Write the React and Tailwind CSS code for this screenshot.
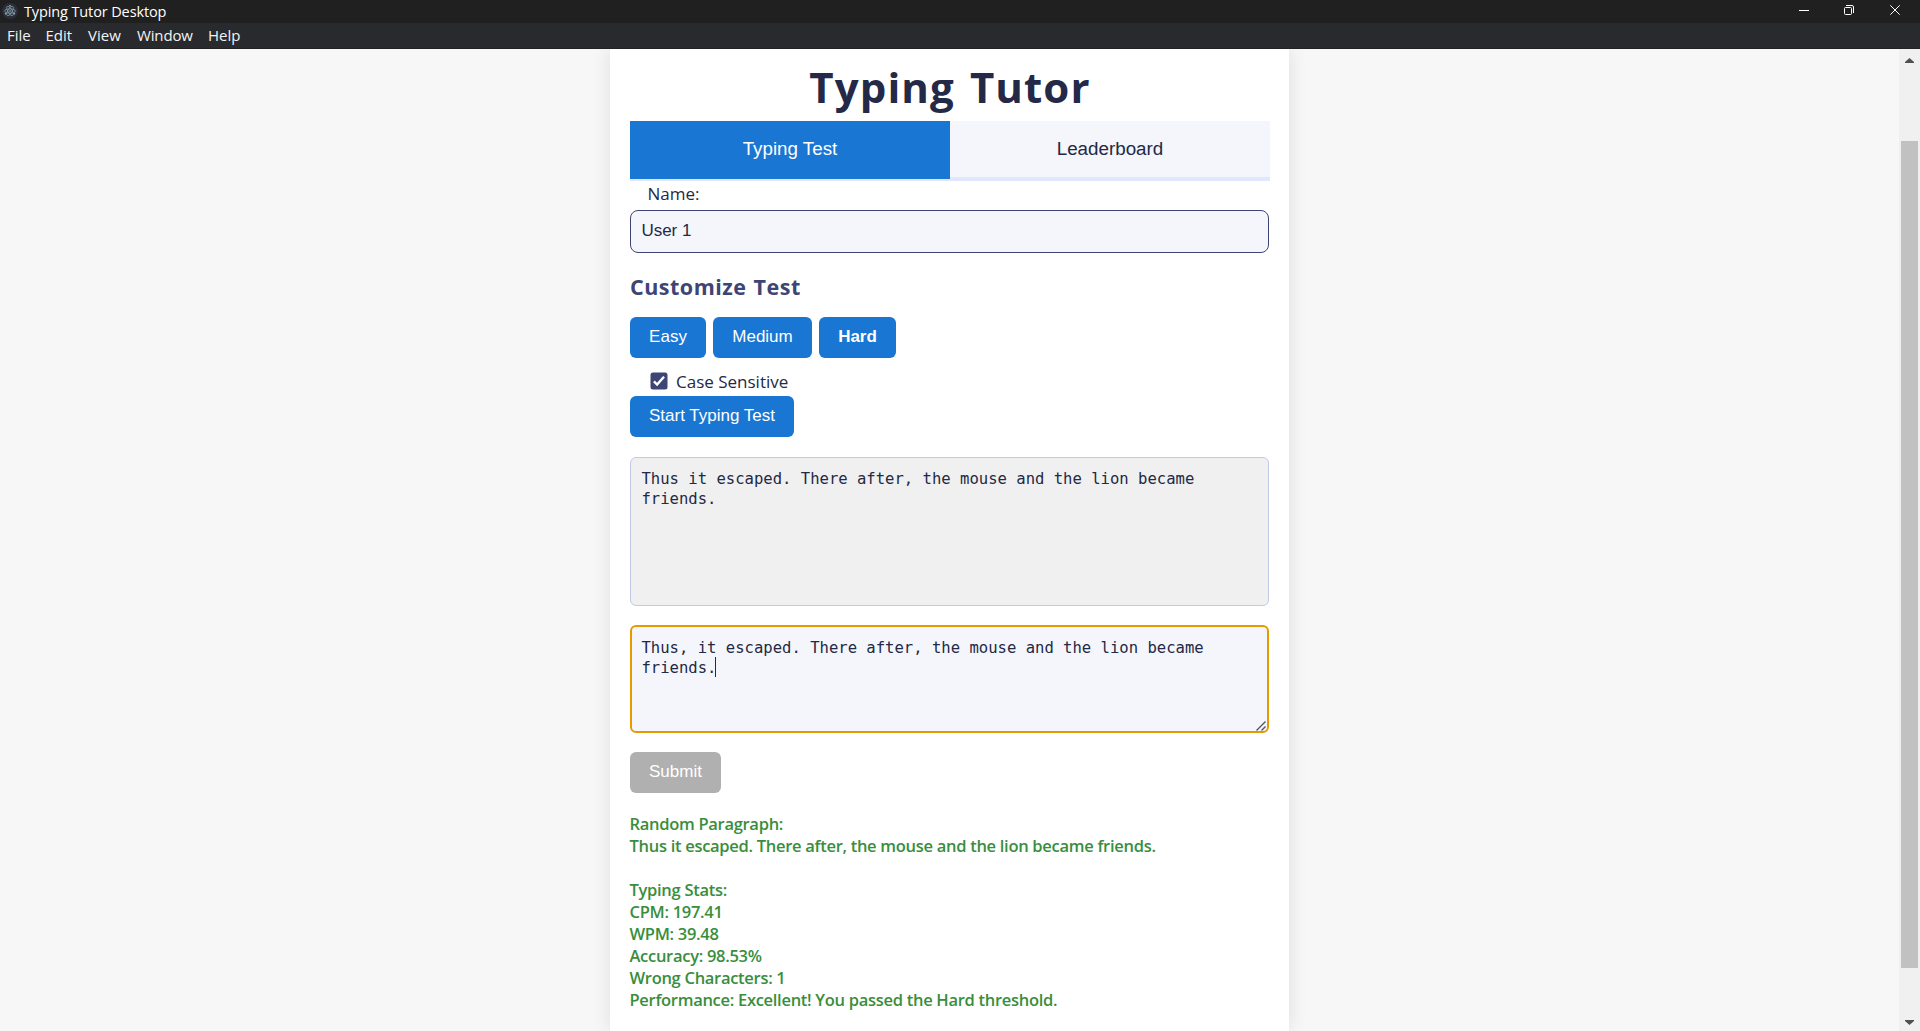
const BUTTON =
  "h-[41px] rounded-[6px] bg-[#1976d2] text-center font-['Liberation_Sans',sans-serif] text-[17px] text-white";

const LEVELS = [
  { name: "Easy", width: "w-[76px]" },
  { name: "Medium", width: "w-[99px]" },
  { name: "Hard", width: "w-[77px] font-bold" },
];

const RESULTS = [
  "Random Paragraph:",
  "Thus it escaped. There after, the mouse and the lion became friends.",
  "",
  "Typing Stats:",
  "CPM: 197.41",
  "WPM: 39.48",
  "Accuracy: 98.53%",
  "Wrong Characters: 1",
  "Performance: Excellent! You passed the Hard threshold.",
];

function AppIcon() {
  return (
    <svg width="16" height="16" viewBox="0 0 16 16" fill="none">
      <circle cx="8" cy="8" r="8" fill="#2b2e3a" />
      <g stroke="#7c9aa2" strokeWidth="0.8">
        <ellipse cx="8" cy="8" rx="5.3" ry="2.1" />
        <ellipse cx="8" cy="8" rx="5.3" ry="2.1" transform="rotate(60 8 8)" />
        <ellipse cx="8" cy="8" rx="5.3" ry="2.1" transform="rotate(120 8 8)" />
      </g>
      <g fill="#9fc2c8">
        <circle cx="8" cy="8" r="0.8" />
        <circle cx="3.6" cy="10.8" r="0.8" />
        <circle cx="12.4" cy="10.8" r="0.8" />
        <circle cx="8" cy="2.8" r="0.8" />
      </g>
    </svg>
  );
}

function TitleBar() {
  return (
    <div className="flex h-[23px] shrink-0 items-start justify-between bg-[#202020] text-white">
      <div className="flex items-start pl-[2px]">
        <div className="mt-[3px]">
          <AppIcon />
        </div>
        <span className="ml-[6px] text-[14.5px] leading-[23px] tracking-[-0.12px]">Typing Tutor Desktop</span>
      </div>
      <div className="flex items-start">
        <svg width="10" height="20" className="mr-[35px]">
          <path d="M0 10.5H10" stroke="#fff" />
        </svg>
        <svg width="10" height="20" className="mr-[36px]" fill="none" stroke="#fff">
          <rect x="0.5" y="7.5" width="7" height="7" rx="1" />
          <path d="M2 5.5H8A1.5 1.5 0 0 1 9.5 7V13" />
        </svg>
        <svg width="10" height="20" className="mr-[20px]">
          <path d="M0.3 5.3L9.7 14.7M9.7 5.3L0.3 14.7" stroke="#fff" />
        </svg>
      </div>
    </div>
  );
}

function MenuBar() {
  return (
    <div className="flex h-[26px] shrink-0 border-b border-[#212225] bg-[#292a2e] pl-[7px] text-[15px] leading-[25px] text-[#f3f3f3]">
      <span className="w-[38.5px]">File</span>
      <span className="w-[42.5px]">Edit</span>
      <span className="w-[49px]">View</span>
      <span className="w-[71px] tracking-[-0.15px]">Window</span>
      <span>Help</span>
    </div>
  );
}

function ScrollBar() {
  return (
    <div className="flex w-[21px] shrink-0 flex-col items-center bg-[#f0f0f0]">
      <svg width="9" height="5" className="mt-[9px] mb-[78px]" fill="#505050">
        <path d="M4.5 0L9 4V5H0V4Z" />
      </svg>
      <div className="h-[827px] w-[17px] bg-[#c1c1c1]" />
      <svg width="9" height="5" className="mt-[52px]" fill="#505050">
        <path d="M0 0H9V1L4.5 5L0 1Z" />
      </svg>
    </div>
  );
}

export default function App() {
  return (
    <div className="flex h-[1031px] w-[1920px] flex-col overflow-hidden bg-[#f7f7f7] font-['Open_Sans',sans-serif] text-[#232946]">
      <TitleBar />
      <MenuBar />
      <div className="flex min-h-0 flex-1">
        <div className="flex min-w-0 flex-1 overflow-hidden pl-[610px]">
          <main className="w-[679px] bg-white pl-[20px] shadow-[0_0_18px_rgba(0,0,0,0.1)]">
            <h1 className="h-[72px] w-[640px] text-center text-[42px] leading-[75px] font-bold tracking-[1.1px] [word-spacing:3px]">
              Typing Tutor
            </h1>

            <div className="flex h-[60px] w-[640px] font-['Liberation_Sans',sans-serif] text-[18.8px] leading-[55px]">
              <div className="flex w-[320px] flex-col border-b-2 border-[#e0e7ff]">
                <button className="h-[58px] bg-[#1976d2] pb-[3px] text-white">Typing Test</button>
              </div>
              <div className="w-[320px] border-b-4 border-[#e0e7ff]">
                <button className="h-[56px] w-full bg-[#f4f6fb] pb-[1px]">Leaderboard</button>
              </div>
            </div>

            <div className="h-[29px] pl-[17.5px] text-[17px] leading-[25px]">Name:</div>
            <div className="flex h-[43px] w-[639px] items-center rounded-[8px] border border-[#3d4575] bg-[#f4f6fb] pb-[2px] pl-[10.4px] font-['Liberation_Sans',sans-serif] text-[17px]">
              User 1
            </div>

            <h2 className="h-[64px] pt-[2px] text-[21.5px] leading-[63px] font-bold tracking-[0.5px] text-[#3d4575] [word-spacing:1px]">
              Customize Test
            </h2>

            <div className="flex gap-[7px]">
              {LEVELS.map((l) => (
                <button key={l.name} className={`${BUTTON} ${l.width} pb-[2px]`}>
                  {l.name}
                </button>
              ))}
            </div>

            <div className="flex h-[38px] items-center pt-[8px] pl-[20px]">
              <svg width="18" height="18" viewBox="0 0 18 18">
                <rect x="0.5" y="0.5" width="17" height="17" rx="2.5" fill="#3d4575" />
                <path d="M3.9 9.4L7.1 12.5L14 4.7" fill="none" stroke="#fff" strokeWidth="2.4" />
              </svg>
              <span className="ml-[8px] pt-px text-[17px] leading-[22px]">Case Sensitive</span>
            </div>

            <button className={`${BUTTON} block w-[164px] pb-px`}>Start Typing Test</button>

            <div className="mt-[20px] h-[149px] w-[639px] rounded-[6px] border border-[#c3cae6] bg-[#f0f0f0] pt-[11px] pl-[10.5px] font-['DejaVu_Sans_Mono',monospace] text-[15.57px] leading-[20px]">
              <p>Thus it escaped. There after, the mouse and the lion became</p>
              <p>friends.</p>
            </div>

            <div className="mt-[19px] flex h-[108px] w-[639px] rounded-[6px] border-2 border-[#e69a00] bg-[#f4f6fb] pt-[11px] pl-[9.5px] font-['DejaVu_Sans_Mono',monospace] text-[15.57px] leading-[20px]">
              <div className="flex-1">
                <p>Thus, it escaped. There after, the mouse and the lion became</p>
                <p className="flex">
                  <span className="w-[73.5px]">friends.</span>
                  <span className="mt-[-1px] h-[20px] w-px bg-[#232946]" />
                </p>
              </div>
              <svg width="10" height="10" className="mr-px self-end" fill="none" stroke="#555" strokeWidth="1.4">
                <path d="M0.5 9.5L9.5 0.5M5.5 9.5L9.5 5.5" />
              </svg>
            </div>

            <button className={`${BUTTON} mt-[19px] block w-[91px] bg-[#b0b0b0]! pb-[2px]`}>Submit</button>

            <div className="mt-[20px] ml-[-0.5px] text-[16.5px] leading-[22px] font-semibold tracking-[-0.29px] text-[#388e3c]">
              {RESULTS.map((line, i) => (
                <p key={i} className="h-[22px] whitespace-nowrap">
                  {line}
                </p>
              ))}
            </div>
          </main>
        </div>
        <ScrollBar />
      </div>
    </div>
  );
}
